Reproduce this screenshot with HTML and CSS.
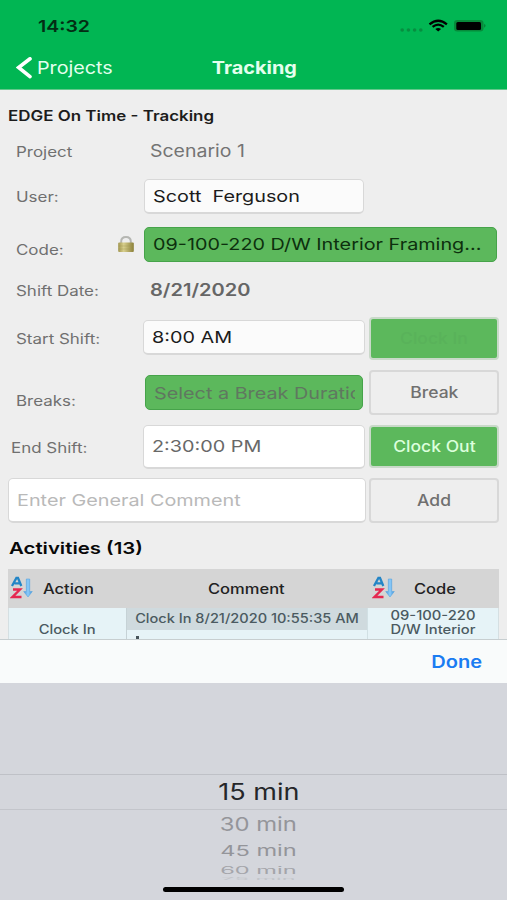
FILE: index.html
```html
<!DOCTYPE html>
<html lang="en">
<head>
<meta charset="utf-8">
<title>Tracking</title>
<link rel="stylesheet" href="styles.css">
</head>
<body>
<div class="phone">
  <header class="top">
    <div class="status">
      <span class="t clock">14:32</span>
      <svg class="indicators" width="86" height="16" viewBox="0 0 86 16">
        <g fill="#078e40"><circle cx="2.2" cy="12" r="1.800"/><circle cx="8.4" cy="12" r="1.800"/><circle cx="14.6" cy="12" r="1.800"/><circle cx="20.8" cy="12" r="1.800"/></g>
        <g fill="none" stroke="#000" stroke-width="2.3"><path d="M29.5 6.3Q38.2-.9 46.900 6.300"/><path d="M32.600 8.900Q38.200 4.300 43.800 8.900"/></g>
        <path d="M35.300 11Q38.200 8.800 41.100 11L38.200 13.600Z"/>
        <rect x="54" y="2" width="29.500" height="11.600" rx="3.300" fill="#078b3b"/>
        <rect x="56.300" y="4" width="24.700" height="8" rx="1.500"/>
        <path d="M84.300 5.800Q86.600 7.800 84.300 9.800Z" fill="#07722f"/>
      </svg>
    </div>
    <nav class="nav">
      <div class="back">
        <svg width="16" height="22" viewBox="0 0 16 22"><path d="M14 1.800L2.600 10.500L14 19.600" fill="none" stroke="#fff" stroke-width="3.600" stroke-linecap="round"/></svg>
        <span class="t projects">Projects</span>
      </div>
      <h1 class="title"><span class="t">Tracking</span></h1>
      <span></span>
    </nav>
  </header>

  <main class="content">
    <h2 class="heading"><span class="t">EDGE On Time - Tracking</span></h2>
    <div class="row project"><span class="label"><span class="t">Project</span></span><span class="value"><span class="t scenario">Scenario 1</span></span></div>
    <div class="row user"><span class="label"><span class="t">User:</span></span><div class="input"><span class="t">Scott&nbsp; Ferguson</span></div></div>
    <div class="row code"><span class="label"><span class="t">Code:</span></span>
      <svg class="lock" width="18" height="18" viewBox="0 0 18 18">
        <defs><linearGradient id="brass"><stop offset="0" stop-color="#a1964f"/><stop offset=".35" stop-color="#d8cf8d"/><stop offset="1" stop-color="#8b8039"/></linearGradient></defs>
        <path d="M4.200 9V6.500Q4.200 2 9 2T13.800 6.500V9" fill="none" stroke="#b5b6b2" stroke-width="2"/>
        <rect x="1.200" y="7.500" width="15.600" height="9.500" rx="1" fill="url(#brass)"/>
        <path d="M1.500 11H16.500M1.500 14H16.500" stroke="#9f954d" stroke-width=".7" opacity=".5"/>
      </svg>
      <div class="input green"><span class="t">09-100-220 D/W Interior Framing...</span></div></div>
    <div class="row date"><span class="label"><span class="t">Shift Date:</span></span><span class="value strong"><span class="t">8/21/2020</span></span></div>
    <div class="row start"><span class="label"><span class="t">Start Shift:</span></span><div class="input"><span class="t">8:00 AM</span></div><div class="button go disabled"><span class="t">Clock In</span></div></div>
    <div class="row breaks"><span class="label"><span class="t">Breaks:</span></span><div class="input green"><div class="clip"><span class="t">Select a Break Duration</span></div></div><div class="button"><span class="t">Break</span></div></div>
    <div class="row end"><span class="label"><span class="t">End Shift:</span></span><div class="input"><span class="t">2:30:00 PM</span></div><div class="button go"><span class="t">Clock Out</span></div></div>
    <div class="row comment"><div class="input"><span class="t">Enter General Comment</span></div><div class="button"><span class="t">Add</span></div></div>
    <h2 class="activities"><span class="t">Activities (13)</span></h2>
    <section class="table">
      <div class="th action">
        <svg class="sort" width="24" height="24" viewBox="0 0 24 24">
          <defs><linearGradient id="arrow" x2="1"><stop offset="0" stop-color="#4194dc"/><stop offset=".5" stop-color="#8dccfa"/><stop offset="1" stop-color="#3c91d9"/></linearGradient></defs>
          <path d="M2 10L6.400 2H8L11.300 10M4.500 7.300H10" fill="none" stroke="#2385c6" stroke-width="2.300"/>
          <path d="M3 13.500H10L2.500 21H11.500" fill="none" stroke="#e52850" stroke-width="2.400"/>
          <path d="M16.300 3H19.700V15.500H22.300L18 21L13.700 15.500H16.300Z" fill="url(#arrow)" stroke="#5ba6df" stroke-width=".6"/>
        </svg>
        <span class="t">Action</span>
      </div>
      <div class="th middle"><span class="t">Comment</span></div>
      <div class="th codes">
        <svg class="sort" width="24" height="24" viewBox="0 0 24 24">
          <path d="M2 10L6.400 2H8L11.300 10M4.500 7.300H10" fill="none" stroke="#2385c6" stroke-width="2.300"/>
          <path d="M3 13.500H10L2.500 21H11.500" fill="none" stroke="#e52850" stroke-width="2.400"/>
          <path d="M16.300 3H19.700V15.500H22.300L18 21L13.700 15.500H16.300Z" fill="url(#arrow)" stroke="#5ba6df" stroke-width=".6"/>
        </svg>
        <span class="t">Code</span>
      </div>
      <div class="td first"><span class="t">Clock In</span></div>
      <div class="td note"><div class="note-head"><span class="t">Clock In 8/21/2020 10:55:35 AM</span></div><i class="mark"></i></div>
      <div class="td last"><span class="t">09-100-220</span><span class="t interior">D/W Interior</span></div>
    </section>
  </main>

  <div class="toolbar"><span class="t">Done</span></div>
  <div class="picker">
    <div class="option selected"><span class="t">15 min</span></div>
    <div class="option near"><span class="t">30 min</span></div>
    <div class="option mid"><span class="t">45 min</span></div>
    <div class="option far"><span class="t">60 min</span></div>
    <div class="option edge"><span class="t">75 min</span></div>
    <div class="home"></div>
  </div>
</div>
</body>
</html>
```

FILE: styles.css
```css
* { box-sizing: border-box; }
body { margin: 0; font-family: Inter, "Liberation Sans", sans-serif; background: #eee; }
h1, h2 { margin: 0; }
.phone { width: 507px; height: 900px; overflow: hidden; display: flex; flex-direction: column; }
.t { display: inline-block; white-space: nowrap; transform: scaleX(1.18); transform-origin: left center; }

.top { height: 90px; flex: none; background: #01b653; border-bottom: 1px solid #64c88c; }
.status { height: 50px; display: flex; justify-content: space-between; align-items: center; padding: 2px 21px 0 38px; }
.clock { font-size: 16.500px; font-weight: 600; color: #032e14; }
.nav { height: 36px; display: grid; grid-template-columns: 1fr 84px 1fr; align-items: center; padding: 0 15px 0 16px; color: #e4ffee; }
.back { display: flex; align-items: center; gap: 5px; }
.projects { font-size: 17px; transform: scaleX(1.16); }
.title { font-size: 17px; font-weight: 650; text-align: center; line-height: 20px; }
.title .t, .button .t, .option .t, .td .t { transform-origin: center; }
.title .t { transform: scaleX(1.17); }

.content { flex: none; height: 549px; overflow: hidden; background: #eee; }
.heading { height: 51px; padding-left: 8px; line-height: 52px; font-size: 14px; font-weight: 600; color: #1c1c1c; }
.heading .t, .label .t { transform: scaleX(1.21); }
.row { display: flex; align-items: flex-start; padding-left: 8px; }
.label { width: 136px; padding-left: 7.500px; flex: none; font-size: 14px; line-height: 21px; color: #707070; }
.value { padding-left: 6px; font-size: 17px; line-height: 20px; color: #747474; }
.scenario { transform: scaleX(1.145); }
.strong { font-weight: 600; color: #666; }
.input { width: 220px; height: 35px; flex: none; padding-left: 8px; border: 1px solid #d8d8d8; border-bottom-width: 2px; border-radius: 5px; background: #fbfbfb; font-size: 16.500px; line-height: 32px; color: #1c1c1c; }
.input .t { transform: scaleX(1.2); }
.green { background: #5cb85c; border-color: #46a34a; border-bottom-width: 1px; color: #0d300e; }
.button { width: 130px; height: 45px; flex: none; border: 2px solid #d8d8d8; border-radius: 4px; font-size: 15.500px; font-weight: 500; line-height: 41px; text-align: center; color: #707070; background: #eee; }
.button .t { transform: scaleX(1.13); }
.go { background: #5cb85c; border-color: #c9d9c9; color: #dcffdc; }
.disabled { color: #59b25a; }

.project { height: 38px; }
.user { height: 48px; }
.user .label { padding-top: 7px; }
.code { height: 53px; }
.code .label { width: 109px; padding-top: 12px; }
.lock { margin: 8px 9px 0 0; flex: none; }
.code .input { width: 353px; }
.date { height: 37px; }
.start { height: 53px; }
.start .label { width: 135px; padding-top: 11px; }
.start .input { width: 222px; margin-top: 3px; }
.start .button, .end .button { width: 130px; margin-left: 4px; }
.start .button { height: 43px; line-height: 39px; }
.breaks { height: 55px; }
.breaks .label { width: 137px; padding-top: 20px; }
.breaks .input { width: 218px; margin-top: 5px; line-height: 34px; color: #607760; }
.clip { width: 201px; overflow: hidden; height: 33px; }
.breaks .button { margin-left: 6px; }
.end { height: 53px; }
.end .label { width: 135px; padding: 12px 0 0 3px; }
.end .input { width: 222px; height: 44px; line-height: 40px; color: #686868; background: #fff; }
.end .button { height: 43px; line-height: 40px; }
.comment { height: 56px; }
.comment .input { width: 358px; height: 45px; line-height: 42px; color: #b9b9b9; background: #fff; }
.comment .button { margin-left: 3px; }
.activities { height: 35px; padding-left: 9px; line-height: 28px; font-size: 16.500px; font-weight: 600; color: #080808; }
.activities .t { transform: scaleX(1.235); }

.table { margin: 0 8px; display: grid; grid-template-columns: 118px 241px 1fr; grid-template-rows: 39px 40px; }
.th { display: flex; align-items: center; background: #d5d5d5; font-size: 14px; font-weight: 500; color: #222; padding-bottom: 1px; }
.sort { margin: 0 9px 0 2px; }
.middle { padding-left: 82px; }
.codes .sort { margin: 0 18px 0 5px; }
.td { background: #e6f3f7; font-size: 12.500px; font-weight: 500; color: #4b5a61; text-align: center; }
.first { padding-top: 14px; border-left: 1px solid #d5dfe2; }
.note { border-left: 1px solid #c6d2d6; }
.note-head { height: 22px; line-height: 22px; background: #cfdade; }
.note-head .t { transform: scaleX(1.165); }
.mark { display: block; width: 3px; height: 7px; margin: 6px 0 0 9px; background: #47545a; }
.last { padding-top: 1px; display: flex; flex-direction: column; align-items: center; line-height: 14px; border-left: 1px solid #d1e0e4; border-right: 1px solid #d5dfe2; }

.toolbar { height: 44px; flex: none; display: flex; align-items: center; justify-content: flex-end; padding-right: 25px; border-top: 1px solid #c7ced0; background: #f9fbfb; color: #1b7cf2; font-size: 17px; font-weight: 600; }
.toolbar .t { transform-origin: right center; }
.picker { flex: 1; padding: 91px 0 0 10px; background: #d4d6dc; position: relative; text-align: center; }
.option { margin-left: -10px; padding-left: 10px; white-space: nowrap; }
.selected { height: 36px; line-height: 34px; border-top: 1px solid #bfc1c7; border-bottom: 1px solid #c3c5cb; font-size: 22.500px; color: #252629; }
.selected .t { transform: scaleX(1.2); }
.near { height: 29px; line-height: 29px; font-size: 20px; color: #94959a; }
.mid { height: 24px; line-height: 24px; font-size: 20px; color: #94959a; }
.far { height: 14px; line-height: 14px; font-size: 20px; color: #a4a5aa; }
.edge { height: 5px; line-height: 5px; font-size: 20px; color: #c3c5ca; }
.near .t { transform: scale(1.19, .94); }
.mid .t { transform: scale(1.18, .75); }
.far .t { transform: scale(1.18, .5); }
.edge .t { transform: scale(1.18, .15); }
.home { position: absolute; left: 163px; bottom: 8px; width: 181px; height: 5px; border-radius: 3px; background: #000; }
```
